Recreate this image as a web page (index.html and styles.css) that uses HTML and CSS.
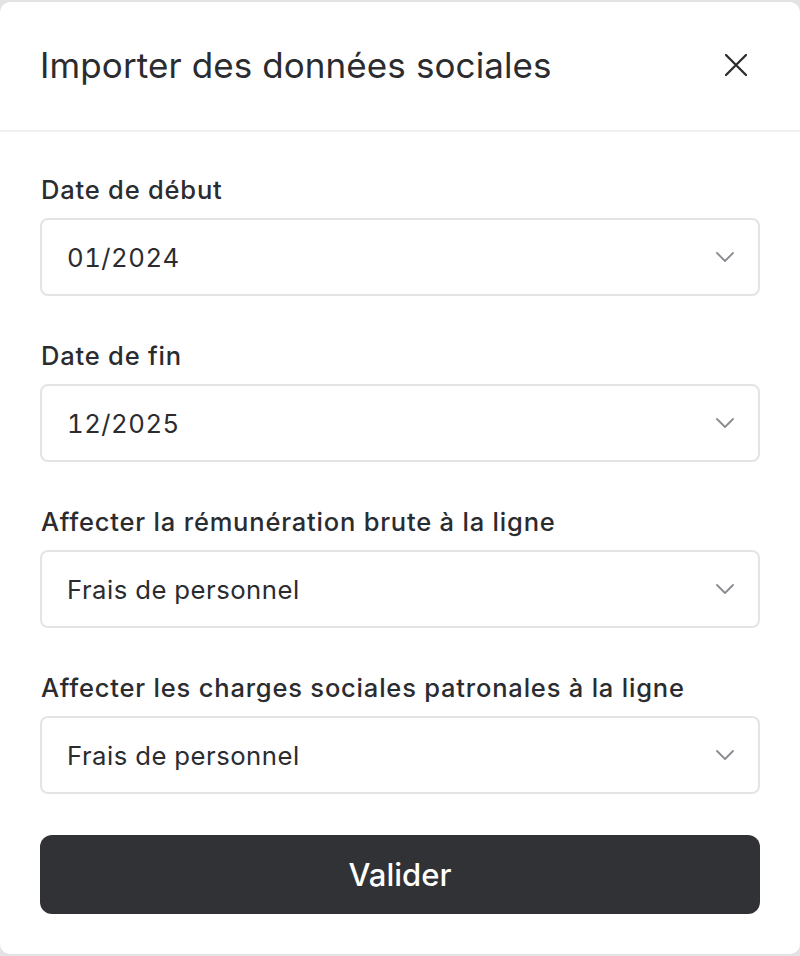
FILE: index.html
```html
<!DOCTYPE html>
<html lang="fr">
<head>
<meta charset="utf-8">
<link rel="stylesheet" href="styles.css">
</head>
<body>
<div class="modal">
  <div class="header">
    <h1 class="title">Importer des données sociales</h1>
    <button class="close" aria-label="Fermer">
      <svg width="22" height="22" viewBox="0 0 22 22"><path d="M1 1L21 21M21 1L1 21" stroke="#2b2c30" stroke-width="2.3" stroke-linecap="round" fill="none"/></svg>
    </button>
  </div>
  <div class="content">
    <div class="field">
      <label class="label">Date de début</label>
      <div class="select"><span>01/2024</span><svg class="chev" width="18" height="10" viewBox="0 0 18 10"><path d="M1 1L9 9L17 1" stroke="#8a8b90" stroke-width="1.8" fill="none" stroke-linecap="round" stroke-linejoin="round"/></svg></div>
    </div>
    <div class="field">
      <label class="label">Date de fin</label>
      <div class="select"><span>12/2025</span><svg class="chev" width="18" height="10" viewBox="0 0 18 10"><path d="M1 1L9 9L17 1" stroke="#8a8b90" stroke-width="1.8" fill="none" stroke-linecap="round" stroke-linejoin="round"/></svg></div>
    </div>
    <div class="field">
      <label class="label">Affecter la rémunération brute à la ligne</label>
      <div class="select"><span>Frais de personnel</span><svg class="chev" width="18" height="10" viewBox="0 0 18 10"><path d="M1 1L9 9L17 1" stroke="#8a8b90" stroke-width="1.8" fill="none" stroke-linecap="round" stroke-linejoin="round"/></svg></div>
    </div>
    <div class="field">
      <label class="label">Affecter les charges sociales patronales à la ligne</label>
      <div class="select"><span>Frais de personnel</span><svg class="chev" width="18" height="10" viewBox="0 0 18 10"><path d="M1 1L9 9L17 1" stroke="#8a8b90" stroke-width="1.8" fill="none" stroke-linecap="round" stroke-linejoin="round"/></svg></div>
    </div>
    <button class="submit">Valider</button>
  </div>
</div>
</body>
</html>
```
FILE: styles.css
```css
html, body {
  margin: 0;
  padding: 0;
}
body {
  background: #e3e3e5;
  font-family: Inter, "Noto Sans", sans-serif;
  color: #2b2c30;
  height: 956px;
  overflow: hidden;
}
.modal {
  margin-top: 2px;
  height: 952px;
  background: #ffffff;
  border-radius: 10px;
  box-sizing: border-box;
  display: flex;
  flex-direction: column;
}
.header {
  height: 130px;
  box-sizing: border-box;
  border-bottom: 2px solid #f0f0f1;
  display: flex;
  align-items: center;
  justify-content: space-between;
  padding: 0 53px 2px 40px;
}
.title {
  margin: 0;
  font-size: 35px;
  font-weight: 400;
  color: #2b2c30;
  letter-spacing: 0.1px;
}
.close {
  border: 0;
  background: none;
  padding: 0;
  width: 22px;
  height: 22px;
  display: flex;
  align-items: center;
  justify-content: center;
  cursor: pointer;
}
.content {
  padding: 42px 40px 0 40px;
  display: flex;
  flex-direction: column;
}
.field {
  display: flex;
  flex-direction: column;
  margin-bottom: 44px;
}
.field:last-of-type {
  margin-bottom: 41px;
}
.label {
  font-size: 25.5px;
  font-weight: 500;
  line-height: 32px;
  letter-spacing: 0.8px;
  padding-left: 1px;
  margin-bottom: 12px;
  color: #2b2c30;
}
.select {
  height: 78px;
  box-sizing: border-box;
  border: 2px solid #e4e4e7;
  border-radius: 8px;
  display: flex;
  align-items: center;
  justify-content: space-between;
  padding: 0 24px 0 25px;
  font-size: 25.7px;
  letter-spacing: 0.5px;
  font-variant-numeric: tabular-nums;
  color: #2b2c30;
}
.submit {
  height: 79px;
  border: 0;
  border-radius: 12px;
  background: #313236;
  color: #ffffff;
  font-family: Inter, "Noto Sans", sans-serif;
  font-size: 31px;
  font-weight: 500;
  cursor: pointer;
}
```
